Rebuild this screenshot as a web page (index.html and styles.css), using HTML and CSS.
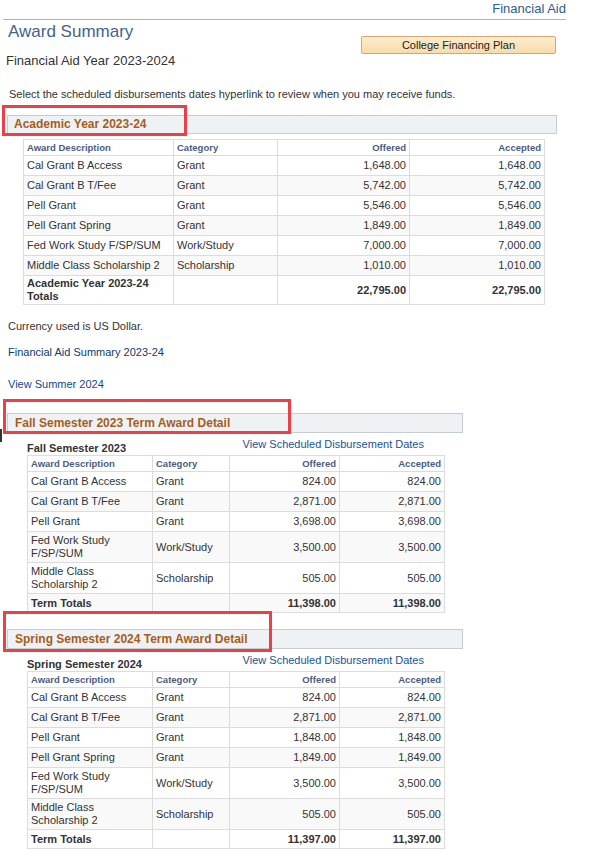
FILE: index.html
```html
<!DOCTYPE html>
<html lang="en">
<head>
<meta charset="utf-8">
<title>Award Summary</title>
<link rel="stylesheet" href="styles.css">
</head>
<body>
<div class="topbar"><span class="crumb">Financial Aid</span></div>

<div class="title-row">
  <div class="titles">
    <h1 class="page-title">Award Summary</h1>
    <div class="aid-year">Financial Aid Year 2023-2024</div>
  </div>
  <button class="btn" type="button">College Financing Plan</button>
</div>

<p class="instr">Select the scheduled disbursements dates hyperlink to review when you may receive funds.</p>

<section class="sec sec-year">
  <div class="mark mark-year"></div>
  <div class="bar">Academic Year 2023-24</div>
  <table class="grid grid-year">
    <colgroup><col class="c1"><col class="c2"><col class="c3"><col class="c4"></colgroup>
    <tr class="hd"><th>Award Description</th><th>Category</th><th class="num">Offered</th><th class="num">Accepted</th></tr>
    <tr><td>Cal Grant B Access</td><td>Grant</td><td class="num">1,648.00</td><td class="num">1,648.00</td></tr>
    <tr><td>Cal Grant B T/Fee</td><td>Grant</td><td class="num">5,742.00</td><td class="num">5,742.00</td></tr>
    <tr><td>Pell Grant</td><td>Grant</td><td class="num">5,546.00</td><td class="num">5,546.00</td></tr>
    <tr><td>Pell Grant Spring</td><td>Grant</td><td class="num">1,849.00</td><td class="num">1,849.00</td></tr>
    <tr><td>Fed Work Study F/SP/SUM</td><td>Work/Study</td><td class="num">7,000.00</td><td class="num">7,000.00</td></tr>
    <tr><td>Middle Class Scholarship 2</td><td>Scholarship</td><td class="num">1,010.00</td><td class="num">1,010.00</td></tr>
    <tr class="tot tall"><td>Academic Year 2023-24 Totals</td><td></td><td class="num">22,795.00</td><td class="num">22,795.00</td></tr>
  </table>
</section>

<p class="note">Currency used is US Dollar.</p>
<a class="link link-summary" href="#">Financial Aid Summary 2023-24</a>
<a class="link link-summer" href="#">View Summer 2024</a>

<section class="sec sec-term sec-fall">
  <div class="mark mark-fall"></div>
  <div class="edge"></div>
  <div class="bar bar-term">Fall Semester 2023 Term Award Detail</div>
  <div class="term-head">
    <span class="term-name">Fall Semester 2023</span>
    <a class="link sched" href="#">View Scheduled Disbursement Dates</a>
  </div>
  <table class="grid grid-term">
    <colgroup><col class="t1"><col class="t2"><col class="t3"><col class="t4"></colgroup>
    <tr class="hd"><th>Award Description</th><th>Category</th><th class="num">Offered</th><th class="num">Accepted</th></tr>
    <tr><td>Cal Grant B Access</td><td>Grant</td><td class="num">824.00</td><td class="num">824.00</td></tr>
    <tr><td>Cal Grant B T/Fee</td><td>Grant</td><td class="num">2,871.00</td><td class="num">2,871.00</td></tr>
    <tr><td>Pell Grant</td><td>Grant</td><td class="num">3,698.00</td><td class="num">3,698.00</td></tr>
    <tr class="two"><td>Fed Work Study F/SP/SUM</td><td>Work/Study</td><td class="num">3,500.00</td><td class="num">3,500.00</td></tr>
    <tr class="two"><td>Middle Class Scholarship 2</td><td>Scholarship</td><td class="num">505.00</td><td class="num">505.00</td></tr>
    <tr class="tot"><td>Term Totals</td><td></td><td class="num">11,398.00</td><td class="num">11,398.00</td></tr>
  </table>
</section>

<section class="sec sec-term sec-spring">
  <div class="mark mark-spring"></div>
  <div class="bar bar-term">Spring Semester 2024 Term Award Detail</div>
  <div class="term-head">
    <span class="term-name">Spring Semester 2024</span>
    <a class="link sched" href="#">View Scheduled Disbursement Dates</a>
  </div>
  <table class="grid grid-term">
    <colgroup><col class="t1"><col class="t2"><col class="t3"><col class="t4"></colgroup>
    <tr class="hd"><th>Award Description</th><th>Category</th><th class="num">Offered</th><th class="num">Accepted</th></tr>
    <tr><td>Cal Grant B Access</td><td>Grant</td><td class="num">824.00</td><td class="num">824.00</td></tr>
    <tr><td>Cal Grant B T/Fee</td><td>Grant</td><td class="num">2,871.00</td><td class="num">2,871.00</td></tr>
    <tr><td>Pell Grant</td><td>Grant</td><td class="num">1,848.00</td><td class="num">1,848.00</td></tr>
    <tr><td>Pell Grant Spring</td><td>Grant</td><td class="num">1,849.00</td><td class="num">1,849.00</td></tr>
    <tr class="two"><td>Fed Work Study F/SP/SUM</td><td>Work/Study</td><td class="num">3,500.00</td><td class="num">3,500.00</td></tr>
    <tr class="two"><td>Middle Class Scholarship 2</td><td>Scholarship</td><td class="num">505.00</td><td class="num">505.00</td></tr>
    <tr class="tot"><td>Term Totals</td><td></td><td class="num">11,397.00</td><td class="num">11,397.00</td></tr>
  </table>
</section>

<p class="note note-bottom">Currency used is US Dollar.</p>
</body>
</html>
```

FILE: styles.css
```css
* { box-sizing: border-box; }

html, body {
  margin: 0;
  padding: 0;
  background: #ffffff;
}

body {
  font-family: "Liberation Sans", Arial, sans-serif;
  font-size: 11px;
  color: #333333;
}

.topbar {
  margin-left: 3px;
  width: 563px;
  height: 20px;
  padding-top: 1px;
  border-bottom: 1px solid #b4b4b4;
  text-align: right;
  font-size: 13px;
  line-height: 16px;
  color: #2d5d8e;
}

.title-row {
  display: flex;
  justify-content: space-between;
  align-items: flex-start;
  width: 556px;
}

.page-title {
  margin: 2px 0 0 8px;
  font-size: 17px;
  font-weight: normal;
  line-height: 20px;
  color: #46628c;
}

.aid-year {
  margin: 11px 0 0 6px;
  font-size: 13px;
  line-height: 16px;
  color: #333333;
}

.btn {
  margin-top: 16px;
  width: 195px;
  height: 18px;
  padding: 0;
  border: 1px solid #d6a66e;
  border-radius: 2px;
  background: linear-gradient(#fcecce, #f8dcaa);
  font-family: "Liberation Sans", Arial, sans-serif;
  font-size: 11px;
  line-height: 16px;
  color: #222222;
}

.instr {
  margin: 18px 0 0 9px;
  line-height: 14px;
}

.sec {
  position: relative;
}

.sec-year { margin-top: 14px; }

.mark {
  position: absolute;
  border: 3px solid #ee3f47;
}

.mark-year { left: 2px; top: -10px; width: 185px; height: 31px; }
.mark-fall { left: 3px; top: -14px; width: 288px; height: 35px; }
.mark-spring { left: 3px; top: -18px; width: 269px; height: 41px; }

.edge {
  position: absolute;
  left: 0;
  top: 16px;
  width: 2px;
  height: 13px;
  background: #333333;
}

.bar {
  margin-left: 7px;
  width: 550px;
  height: 19px;
  padding-left: 6px;
  border: 1px solid #c6ccd2;
  background: #eff2f4;
  font-size: 12px;
  font-weight: bold;
  line-height: 17px;
  color: #a65d1d;
}

.bar-term {
  width: 456px;
  height: 20px;
  padding-left: 7px;
  line-height: 18px;
}

.grid {
  border-collapse: collapse;
  table-layout: fixed;
  border: 1px solid #dcdcdc;
}

.grid th,
.grid td {
  border: 1px solid #dcdcdc;
  padding: 0 3px;
  text-align: left;
  vertical-align: middle;
  overflow: hidden;
}

.grid th {
  height: 16px;
  font-size: 9.5px;
  font-weight: bold;
  color: #4b5c7d;
  line-height: 12px;
}

.grid td {
  height: 20px;
  font-size: 11px;
  line-height: 13px;
  color: #333333;
}

.grid tr:nth-child(odd) td { background: #f9f9f9; }

.grid .num { text-align: right; }

.grid .tot td { font-weight: bold; }

.grid-year {
  margin: 5px 0 0 23px;
  width: 521px;
}

.grid-year .c1 { width: 150px; }
.grid-year .c2 { width: 104px; }
.grid-year .c3 { width: 132px; }
.grid-year .c4 { width: 135px; }

.grid-year .tall td { height: 29px; }

.grid-term {
  margin-left: 27px;
  width: 417px;
}

.grid-term .t1 { width: 125px; }
.grid-term .t2 { width: 77px; }
.grid-term .t3 { width: 110px; }
.grid-term .t4 { width: 105px; }

.grid-term th { height: 16px; }
.grid-term .two td { height: 31px; }
.grid-term .tot td { height: 19px; }

.note {
  margin: 14px 0 0 8px;
  line-height: 14px;
}

.link {
  display: block;
  text-decoration: none;
  line-height: 14px;
  color: #0e4a8a;
}

.link-summary {
  margin: 12px 0 0 8px;
  color: #0f3a70;
}

.link-summer {
  margin: 18px 0 0 8px;
}

.sec-fall { margin-top: 22px; }
.sec-spring { margin-top: 16px; }

.term-head {
  display: flex;
  justify-content: space-between;
  align-items: flex-start;
  width: 397px;
  height: 22px;
  margin-left: 27px;
}

.term-name {
  padding-top: 8px;
  font-weight: bold;
  line-height: 14px;
  color: #333333;
}

.sched {
  padding-top: 4px;
  color: #1a5293;
}

.note-bottom {
  margin-top: 16px;
}
```
